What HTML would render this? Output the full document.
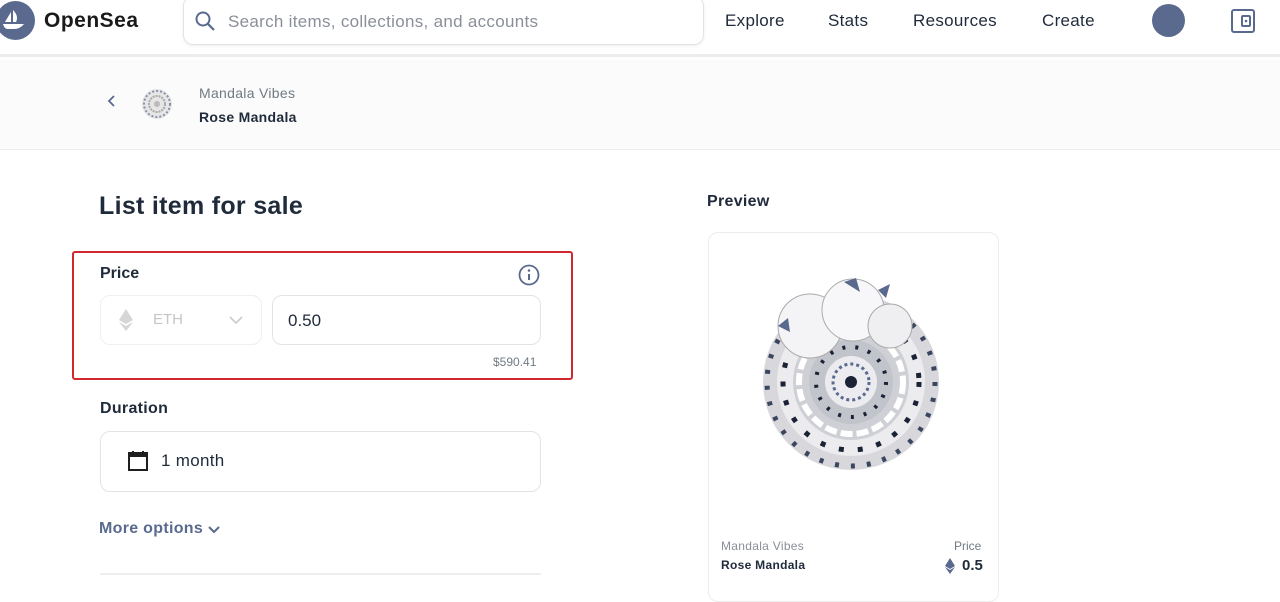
<!DOCTYPE html>
<html><head><meta charset="utf-8"><style>
*{box-sizing:border-box;margin:0;padding:0}
body{width:1280px;height:587px;overflow:hidden;background:#fff;font-family:"Liberation Sans",sans-serif;color:#04111d;position:relative}
.a{position:absolute}
.nav{font-size:17px;color:#1f2a3a;top:11px;letter-spacing:0.3px}
</style></head><body>
<div class="a" style="left:0;top:0;width:1280px;height:57px;background:#fff;border-bottom:3px solid #ececec"></div>
<div class="a" style="left:-4px;top:1px;width:39px;height:39px;border-radius:50%;background:#5a6a8e"></div>
<svg class="a" style="left:0;top:8px" width="30" height="24" viewBox="0 0 30 24"><path d="M5 14 L11 4 L11 14Z M13 2 Q19 8 16 14 L13 14Z M3 16 H24 Q20 21 14 21 H7 Q4 20 3 16Z" fill="#fff"/></svg>
<div class="a" style="left:44px;top:9px;font-size:21px;font-weight:bold;color:#1a1a1a;letter-spacing:0.5px">OpenSea</div>
<div class="a" style="left:183px;top:-4px;width:521px;height:49px;border:1px solid #e3e3e3;border-radius:10px;box-shadow:0 1px 3px #eee"></div>
<svg class="a" style="left:194px;top:10px" width="22" height="22" viewBox="0 0 22 22"><circle cx="9" cy="9" r="6.5" fill="none" stroke="#5a6a8e" stroke-width="2"/><path d="M14 14 L20 20" stroke="#5a6a8e" stroke-width="2.2"/></svg>
<div class="a" style="left:228px;top:12px;font-size:17px;color:#8a8f98;letter-spacing:0.3px">Search items, collections, and accounts</div>
<div class="a nav" style="left:725px">Explore</div>
<div class="a nav" style="left:828px">Stats</div>
<div class="a nav" style="left:913px">Resources</div>
<div class="a nav" style="left:1042px">Create</div>
<div class="a" style="left:1152px;top:4px;width:33px;height:33px;border-radius:50%;background:#5a6a8e"></div>
<svg class="a" style="left:1230px;top:8px" width="26" height="26" viewBox="0 0 26 26"><rect x="2" y="2" width="22" height="22" rx="2" fill="none" stroke="#5a6a8e" stroke-width="2"/><rect x="12" y="8" width="8" height="10" rx="1" fill="none" stroke="#5a6a8e" stroke-width="2"/><circle cx="16" cy="13" r="1.3" fill="#5a6a8e"/></svg>

<div class="a" style="left:0;top:60px;width:1280px;height:90px;background:#fbfbfb;border-bottom:1px solid #eee"></div>
<svg class="a" style="left:106px;top:94px" width="12" height="14" viewBox="0 0 12 14"><path d="M8 2 L3 7 L8 12" fill="none" stroke="#5a6a8e" stroke-width="1.8"/></svg>
<svg class="a" style="left:141px;top:88px" width="32" height="32" viewBox="0 0 32 32"><circle cx="16" cy="16" r="15" fill="#e6e6e6"/><circle cx="16" cy="16" r="13" fill="none" stroke="#8891a8" stroke-width="2" stroke-dasharray="2 2"/><circle cx="16" cy="16" r="8" fill="none" stroke="#aaa" stroke-width="2" stroke-dasharray="2 1"/><circle cx="16" cy="16" r="3" fill="#bbb"/></svg>
<div class="a" style="left:199px;top:85px;font-size:14px;color:#707a83;letter-spacing:0.3px">Mandala Vibes</div>
<div class="a" style="left:199px;top:109px;font-size:14px;font-weight:bold;color:#1f2a3a;letter-spacing:0.3px">Rose Mandala</div>

<div class="a" style="left:99px;top:192px;font-size:25px;font-weight:bold;color:#1f2a3a;letter-spacing:0.3px">List item for sale</div>
<div class="a" style="left:72px;top:251px;width:501px;height:129px;border:2px solid #d0282e;border-radius:3px"></div>
<div class="a" style="left:100px;top:265px;font-size:16px;font-weight:bold;color:#1f2a3a">Price</div>
<svg class="a" style="left:517px;top:263px" width="24" height="24" viewBox="0 0 24 24"><circle cx="12" cy="12" r="9.5" fill="none" stroke="#5a6a8e" stroke-width="1.8"/><path d="M12 11 V17" stroke="#5a6a8e" stroke-width="2"/><circle cx="12" cy="7.5" r="1.3" fill="#5a6a8e"/></svg>
<div class="a" style="left:100px;top:295px;width:162px;height:50px;border:1px solid #f0f0f0;border-radius:10px"></div>
<svg class="a" style="left:117px;top:308px" width="18" height="24" viewBox="0 0 18 24"><path d="M9 1 L16 12 L9 16 L2 12Z M2 14 L9 18 L16 14 L9 23Z" fill="#d6d6d6"/></svg>
<div class="a" style="left:153px;top:311px;font-size:15px;color:#c6c6c6">ETH</div>
<svg class="a" style="left:228px;top:314px" width="16" height="12" viewBox="0 0 16 12"><path d="M2 3 L8 9 L14 3" fill="none" stroke="#ccc" stroke-width="1.6"/></svg>
<div class="a" style="left:272px;top:295px;width:269px;height:50px;border:1px solid #e3e3e3;border-radius:10px"></div>
<div class="a" style="left:288px;top:311px;font-size:17px;color:#1f2a3a">0.50</div>
<div class="a" style="left:493px;top:355px;font-size:12px;color:#707a83">$590.41</div>

<div class="a" style="left:100px;top:400px;font-size:16px;font-weight:bold;color:#1f2a3a;letter-spacing:0.3px">Duration</div>
<div class="a" style="left:100px;top:431px;width:441px;height:61px;border:1px solid #e3e3e3;border-radius:10px"></div>
<svg class="a" style="left:127px;top:450px" width="22" height="22" viewBox="0 0 22 22"><rect x="2" y="3" width="18" height="17" fill="none" stroke="#1f1f1f" stroke-width="2"/><rect x="2" y="3" width="18" height="4" fill="#1f1f1f"/><path d="M6 1V4 M16 1V4" stroke="#1f1f1f" stroke-width="2"/></svg>
<div class="a" style="left:161px;top:451px;font-size:17px;color:#1f2a3a;letter-spacing:0.3px">1 month</div>
<div class="a" style="left:99px;top:520px;font-size:16px;font-weight:bold;color:#5a6a8e;letter-spacing:0.3px">More options</div>
<svg class="a" style="left:207px;top:524px" width="14" height="12" viewBox="0 0 14 12"><path d="M2 3 L7 8 L12 3" fill="none" stroke="#5a6a8e" stroke-width="2"/></svg>
<div class="a" style="left:100px;top:573px;width:441px;height:2px;background:#eee"></div>

<div class="a" style="left:707px;top:193px;font-size:16px;font-weight:bold;color:#1f2a3a;letter-spacing:0.3px">Preview</div>
<div class="a" style="left:708px;top:232px;width:291px;height:370px;border:1px solid #ececec;border-radius:10px"></div>
<svg class="a" style="left:758px;top:278px" width="185" height="195" viewBox="0 0 185 195">
<g transform="translate(93,104)">
<circle r="88" fill="#d8d8dc"/>
<circle r="84" fill="none" stroke="#3a4560" stroke-width="5" stroke-dasharray="4 12"/>
<circle r="74" fill="#ececef"/>
<circle r="68" fill="none" stroke="#1b2236" stroke-width="5" stroke-dasharray="5 14"/>
<circle r="58" fill="#cfd0d5"/>
<circle r="52" fill="none" stroke="#fff" stroke-width="6" stroke-dasharray="12 4"/>
<circle r="42" fill="#c2c4cb"/>
<circle r="35" fill="none" stroke="#1b2236" stroke-width="4" stroke-dasharray="3 10"/>
<circle r="26" fill="#ececf0"/>
<circle r="18" fill="none" stroke="#5a6a8e" stroke-width="3" stroke-dasharray="3 3"/>
<circle r="6" fill="#1b2236"/>
</g>
<circle cx="52" cy="48" r="32" fill="#f4f4f6" stroke="#aaa" stroke-width="1"/>
<circle cx="95" cy="32" r="31" fill="#f7f7f9" stroke="#aaa" stroke-width="1"/>
<circle cx="132" cy="48" r="22" fill="#efeff2" stroke="#aaa" stroke-width="1"/>
<path d="M86 4 L98 0 L102 14Z M120 12 L132 6 L128 20Z M20 48 L30 40 L32 54Z" fill="#5a6a8e"/>
</svg>
<div class="a" style="left:721px;top:539px;font-size:12px;color:#8a8f98;letter-spacing:0.3px">Mandala Vibes</div>
<div class="a" style="left:721px;top:558px;font-size:12px;font-weight:bold;color:#1f2a3a;letter-spacing:0.3px">Rose Mandala</div>
<div class="a" style="left:954px;top:539px;font-size:12px;color:#707a83">Price</div>
<svg class="a" style="left:944px;top:557px" width="12" height="18" viewBox="0 0 12 18"><path d="M6 1 L11 9 L6 12 L1 9Z M1 10 L6 13 L11 10 L6 17Z" fill="#5a6a8e"/></svg>
<div class="a" style="left:962px;top:557px;font-size:15px;font-weight:bold;color:#1f2a3a">0.5</div>
</body></html>
